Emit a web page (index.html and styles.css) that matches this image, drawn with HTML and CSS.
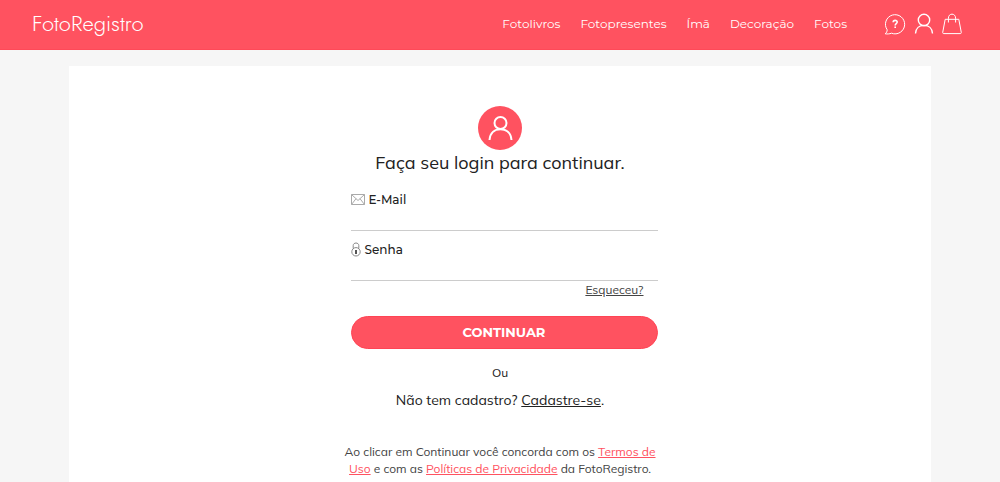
FILE: index.html
```html
<!DOCTYPE html>
<html lang="pt-BR">
<head>
<meta charset="utf-8">
<meta name="viewport" content="width=device-width, initial-scale=1">
<title>FotoRegistro</title>
<link rel="stylesheet" href="styles.css">
</head>
<body>
<header class="topbar">
  <a class="logo" href="#">FotoRegistro</a>
  <nav class="menu">
    <a href="#">Fotolivros</a>
    <a href="#">Fotopresentes</a>
    <a href="#">Ímã</a>
    <a href="#">Decoração</a>
    <a href="#">Fotos</a>
  </nav>
  <div class="tools">
    <a href="#" aria-label="Ajuda">
      <svg width="22" height="22" viewBox="0 0 22 22"><path d="M3.200 16.800A9.600 9.600 0 1 1 7.500 20.200C5.500 21 3.300 21.100 1.200 20.800C2.600 19.600 3.200 18.300 3.200 16.800Z"/><path class="bold" d="M9.200 9.200C9.200 6.800 13.200 6.800 13.200 9.100C13.200 10.700 11.200 10.600 11.200 12.400M11.200 13.600V15"/></svg>
    </a>
    <a href="#" aria-label="Minha conta">
      <svg width="20" height="22" viewBox="0 0 20 22"><circle class="mid" cx="10" cy="7" r="5.700"/><path class="mid" d="M1.500 20.500C1.800 15.400 5.300 12.400 10 12.400S18.200 15.400 18.500 20.500"/></svg>
    </a>
    <a href="#" aria-label="Sacola">
      <svg width="20" height="22" viewBox="0 0 20 22"><path d="M3.200 6.300H16.800L19.300 19.500Q19.300 20.600 18.300 20.600H1.700Q.7 20.600.7 19.500ZM6.400 9.500V5.200C6.400-.2 13.600-.2 13.600 5.200V9.500"/></svg>
    </a>
  </div>
</header>
<main class="panel">
  <form class="login">
    <svg class="avatar" width="44" height="44" viewBox="0 0 44 44"><circle class="disc" cx="22" cy="22" r="22"/><circle cx="22.500" cy="17" r="6"/><path d="M11.500 34C12 27 16.500 23.200 22.500 23.200S33 27 33.500 34"/></svg>
    <h1 class="title">Faça seu login para continuar.</h1>
    <div class="controls">
      <div class="field">
        <label for="email">
          <svg width="14" height="11" viewBox="0 0 14 11"><path d="M.5.500H13.500V10.500H.5ZM.5.500L7 6.500L13.500.500M.5 10.500L5 4.700M13.500 10.500L9 4.700"/></svg>
          E-Mail
        </label>
        <input id="email" type="email">
      </div>
      <div class="field">
        <label for="senha">
          <svg class="lock" width="10" height="15" viewBox="0 0 10 15"><circle cx="5" cy="9.800" r="4.200"/><path d="M2.200 6.500V3.500C2.200.2 7.800.2 7.800 3.500V6.500"/><path class="key" d="M5 8V12"/></svg>
          Senha
        </label>
        <input id="senha" type="password">
      </div>
      <a class="forgot" href="#">Esqueceu?</a>
      <button class="submit" type="submit">CONTINUAR</button>
    </div>
    <p class="or">Ou</p>
    <p class="signup">Não tem cadastro? <a href="#">Cadastre-se</a>.</p>
    <p class="terms">Ao clicar em Continuar você concorda com os <a href="#">Termos de Uso</a> e com as <a href="#">Políticas de Privacidade</a> da FotoRegistro.</p>
  </form>
</main>
</body>
</html>
```
FILE: styles.css
```css
* {
  box-sizing: border-box;
}

body {
  margin: 0;
  background: #f6f6f6;
  color: #222;
  font-family: Muli, Mulish, Nunito, "Nunito Sans", Lato, sans-serif;
}

.topbar {
  display: flex;
  align-items: center;
  height: 50px;
  padding: 0 38px 2px 32px;
  background: #ff5260;
  border-bottom: 1px solid #ff4958;
}

.topbar a {
  color: #fff;
  text-decoration: none;
}

.logo {
  margin-right: auto;
  padding-bottom: 2px;
  font-family: "Futura Light", Jost, Lato, sans-serif;
  font-size: 22px;
  font-weight: 300;
  line-height: 28px;
}

.menu {
  display: flex;
  gap: 20px;
  font-family: Montserrat, Inter, sans-serif;
  font-size: 12px;
  font-weight: 400;
  line-height: 20px;
}

.tools {
  display: flex;
  gap: 8px;
  margin-left: 37px;
}

.tools svg {
  display: block;
  fill: none;
  stroke: #fff;
  stroke-width: 1;
}

.tools .mid {
  stroke-width: 1.4;
}

.tools .bold {
  stroke-width: 1.6;
}

.panel {
  max-width: 862px;
  margin: 16px auto 0;
  padding: 40px 20px 5px;
  background: #fff;
}

.login {
  display: flex;
  flex-direction: column;
  max-width: 315px;
  margin: 0 auto;
}

.avatar {
  align-self: center;
  fill: none;
  stroke: #fff;
  stroke-width: 2;
}

.avatar .disc {
  fill: #ff5260;
  stroke: none;
}

.title {
  margin: 0 0 13px;
  font-size: 18px;
  font-weight: 400;
  line-height: 26px;
  text-align: center;
}

.controls {
  display: flex;
  flex-direction: column;
  padding-left: 8px;
}

.field {
  margin-bottom: 8px;
  font-family: Montserrat, Inter, sans-serif;
}

.field label {
  display: flex;
  align-items: center;
  gap: 4px;
  font-size: 12px;
  font-weight: 500;
  line-height: 21px;
}

.field svg {
  fill: none;
  stroke: #aaa;
}

.field .lock {
  stroke: #888;
}

.field .key {
  stroke: #555;
  stroke-width: 2;
}

.field input {
  display: block;
  width: 100%;
  height: 21px;
  padding: 0;
  border: 0;
  border-bottom: 1px solid #ccc;
  background: transparent;
  font: inherit;
}

.forgot {
  align-self: flex-end;
  margin: -8px 14px 17px 0;
  color: #444;
  font-size: 12px;
  line-height: 18px;
}

.submit {
  height: 33px;
  padding: 0 0 2px;
  border: 1px solid #ff4454;
  border-radius: 17px;
  background: #ff5260;
  color: #fff;
  font-family: Montserrat, Inter, sans-serif;
  font-size: 13px;
  font-weight: 700;
}

.or,
.signup,
.terms {
  margin: 0;
  text-align: center;
}

.or {
  margin-top: 15px;
  font-size: 12px;
  line-height: 18px;
}

.signup {
  margin-top: 8px;
  font-size: 14px;
  line-height: 20px;
}

.signup a {
  color: inherit;
}

.terms {
  margin-top: 33px;
  color: #444;
  font-size: 12px;
  line-height: 17px;
}

.terms a {
  color: #ff5260;
}
```
